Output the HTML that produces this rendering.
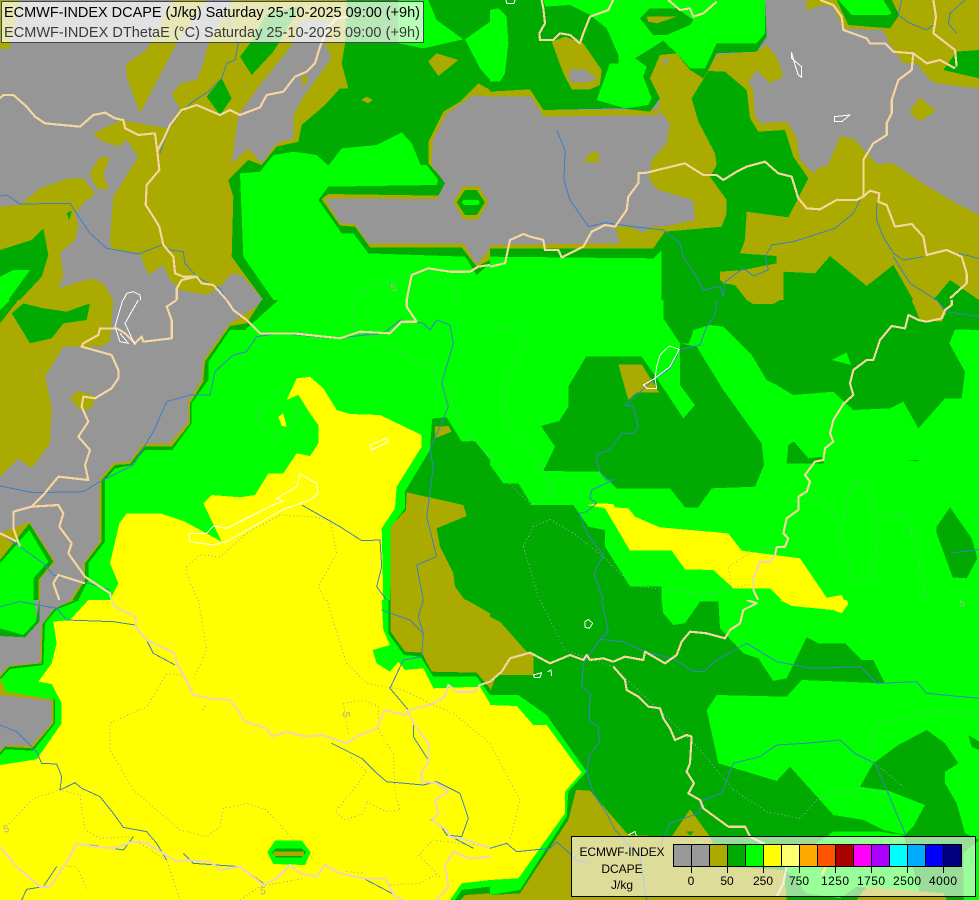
<!DOCTYPE html>
<html><head><meta charset="utf-8"><title>ECMWF-INDEX DCAPE</title>
<style>
html,body{margin:0;padding:0;background:#969696;overflow:hidden}
svg{display:block}
#m{shape-rendering:crispEdges;font-family:"Liberation Sans",sans-serif}
.g{fill:#969696}.o{fill:#aaaa00}.d{fill:#00aa00}.b{fill:#00ff00}.y{fill:#ffff00}
.c,.r,.w,.p{fill:none;stroke-linejoin:round}
.c{stroke:#f5d5a0;stroke-width:6.5}
.r{stroke:#3f7fc4;stroke-width:3}
.w{stroke:#fff;stroke-width:3}
.p{stroke:#a0a0c8;stroke-width:3;stroke-dasharray:3 8}
.n{fill:#b0b090;font-size:32px}
</style></head><body>
<svg id="m" xmlns="http://www.w3.org/2000/svg" width="979" height="900" viewBox="0 0 979 900">
<!-- Q1 -->
<svg x="0" y="0" width="490" height="300" viewBox="0 0 1470 900">
<rect class="g" width="1470" height="900"/>
<polygon class="o" points="0,130 35,130 25,148 0,145"/>
<polygon class="o" points="0,0 60,0 30,130 0,130"/>
<polygon class="o" points="380,190 440,150 520,0 620,0 530,130 420,340 380,230"/>
<polygon class="o" points="0,620 60,615 120,565 205,535 250,535 285,580 245,615 225,640 235,680 225,720 180,760 190,825 175,865 275,835 310,850 340,900 0,900"/>
<polygon class="d" points="0,750 95,720 130,685 145,765 125,830 60,900 0,900"/>
<polygon class="b" points="0,830 40,810 90,810 25,900 0,900"/>
<polygon class="d" points="200,640 215,632 208,660"/>
<polygon class="o" points="300,470 330,475 310,520 325,570 290,565 268,520"/>
<polygon class="o" points="280,400 365,360 500,385 510,370 540,325 515,285 540,250 590,240 610,190 625,130 700,0 1040,0 1035,130 1025,190 1045,265 1020,265 975,315 905,375 895,428 830,440 785,495 745,480 685,540 700,590 695,770 790,900 725,825 695,820 660,860 620,885 540,870 510,840 490,795 445,825 420,760 335,750 330,720 340,590 415,470 380,420 355,440 300,420"/>
<polygon class="g" points="695,490 715,345 780,255 880,130 900,60 990,60 975,130 995,175 910,290 880,345 880,415 830,430 785,490 745,445"/>
<polygon class="o" points="905,225 928,235 910,262"/>
<polygon class="d" points="720,170 750,130 800,40 900,20 835,130 820,155 755,225"/>
<polygon class="d" points="620,290 665,235 695,295 660,345"/>
<polygon class="d" points="1035,130 1040,0 1470,0 1470,900 790,900 695,770 700,590 685,540 745,480 785,495 830,440 895,425 905,375 975,315 1020,265 1045,265 1025,190"/>
<polygon class="o" points="1285,425 1330,335 1380,305 1435,250 1470,270 1470,780 1430,800 1385,742 1110,742 1065,680 1020,677 965,597 985,582 1315,587 1337,548 1285,490"/>
<polygon class="g" points="975,595 1310,597 1335,550 1295,495 1298,420 1340,340 1420,285 1470,290 1470,745 1430,795 1390,730 1105,730 1065,672 1020,670"/>
<polygon class="b" points="720,520 780,515 820,465 880,455 950,465 985,497 1025,445 1130,435 1205,397 1235,430 1262,495 1280,495 1315,540 1310,555 985,560 955,600 1025,700 1060,700 1105,760 1395,770 1430,825 1470,790 1470,900 820,900 730,770"/>
<polygon class="o" points="1360,605 1390,558 1435,558 1465,605 1435,658 1390,658"/>
<polygon class="d" points="1370,607 1395,570 1430,570 1455,607 1430,645 1395,645"/>
<polygon class="b" points="1385,607 1392,600 1435,600 1440,607 1435,615 1392,615"/>
<polygon class="b" points="1270,0 1285,0 1310,60 1390,118 1270,145 1195,130 1195,0"/>
<polygon class="b" points="1395,118 1470,65 1470,240 1440,205"/>
<polygon class="o" points="1285,185 1310,160 1375,180 1315,228"/>
<polygon class="o" points="1083,300 1100,290 1118,300 1105,310"/>
<polyline class="p" points="1060,885 1180,840 1240,820 1340,840 1370,880 1375,900"/>
<text class="n" x="1172" y="872" transform="rotate(-15 1185 860)">5</text>
<polyline class="r" points="640,0 680,50 715,130 705,180 680,190 665,235 625,275 585,300 545,335 510,380 490,430 480,460"/>
<polyline class="r" points="0,588 20,585 60,612 210,610 230,640 270,700 320,745 415,762 485,735 510,750 550,755 555,790 590,830 625,850 660,865 680,900"/>
<polyline class="c" points="0,295 10,285 40,285 80,320 105,350 135,370 240,380 280,345 315,338 345,355 370,360 375,385 415,405 465,400 472,455 478,510 440,555 437,615 460,650 478,680 490,735 520,770 525,820 550,830 590,830 605,850 640,855 680,900"/>
<polyline class="c" points="590,830 545,840 530,865 530,900"/>
<polyline class="c" points="470,455 490,420 510,375 545,330 590,315 625,330 660,345 690,330 720,345 780,322 800,285 850,275 885,230 920,215 945,190 960,140 985,80 1010,55 1045,50"/>
<polyline class="c" points="1220,900 1235,825 1285,805 1350,815 1410,815 1435,800 1470,795"/>
<polyline class="w" points="370,900 380,880 400,875 420,885 422,900"/>
</svg>
<!-- Q2 -->
<svg x="490" y="0" width="489" height="300" viewBox="0 0 1467 900">
<rect class="g" width="1467" height="900"/>
<polygon class="o" points="950,0 950,30 1000,15 1030,20 1060,85 1180,90 1195,125 1240,190 1280,190 1320,240 1340,250 1467,265 1467,0"/>
<polygon class="d" points="1040,0 1075,75 1200,85 1228,45 1205,0"/>
<polygon class="b" points="1045,0 1085,45 1195,45 1205,40 1180,0"/>
<polygon class="d" points="1400,155 1467,150 1467,235 1360,210"/>
<polygon class="o" points="1290,293 1338,332 1290,365 1258,335"/>
<polygon class="o" points="1467,645 1380,600 1290,545 1210,490 1160,492 1090,415 1050,410 1012,500 990,500 970,520 930,480 920,410 890,365 810,370 795,345 790,270 775,245 800,210 840,250 880,230 860,170 830,135 800,155 680,165 655,210 640,235 600,210 560,160 510,165 480,235 510,295 505,330 540,370 530,430 485,480 478,540 505,570 610,600 615,660 520,680 490,680 455,698 420,680 375,678 390,730 0,735 0,900 1467,900"/>
<polygon class="g" points="520,175 538,175 523,200"/>
<polygon class="o" points="280,485 305,455 325,458 328,488"/>
<polygon class="o" points="0,275 120,268 160,330 505,330 505,345 160,350 125,290 0,290"/>
<polygon class="d" points="0,0 825,0 830,110 800,155 680,160 655,210 640,235 600,210 560,160 510,165 480,235 510,295 480,335 395,325 160,330 120,268 0,275"/>
<polygon class="o" points="185,125 225,110 280,130 335,210 330,255 300,268 245,268 220,220"/>
<polygon class="g" points="235,215 250,207 290,210 322,240 280,248 240,245"/>
<polygon class="b" points="160,0 165,20 240,15 300,45 350,85 385,165 385,190 360,190 320,300 405,325 475,315 485,295 460,230 470,200 435,175 520,122 570,170 600,205 645,205 680,130 800,130 825,100 825,0"/>
<polygon class="d" points="450,55 480,25 560,25 610,60 600,75 530,105 490,105"/>
<polygon class="o" points="470,50 560,50 500,70 475,65"/>
<polygon class="b" points="0,30 25,25 50,50 55,130 45,220 30,245 0,245"/>
<polygon class="d" points="655,213 705,215 770,270 780,355 805,395 885,390 910,470 955,535 895,652 770,635 765,720 750,760 860,768 860,790 760,810 690,815 690,840 700,850 735,855 770,900 515,900 515,750 490,775 0,770 0,745 490,745 525,695 695,680 710,640 710,600 660,530 680,495 675,460 625,365 605,295"/>
<polygon class="b" points="0,770 490,775 515,750 515,900 0,900"/>
<polygon class="d" points="880,900 880,815 975,820 1020,768 1130,858 1210,795 1270,900"/>
<polygon class="d" points="1330,900 1380,840 1467,900"/>
<polyline class="r" points="200,390 225,450 222,540 240,600 285,665 295,680 345,668 430,680 520,690 570,730 580,770 625,840 640,870 690,860 700,890 705,845 760,805 790,828 835,810 825,770 845,735 910,725 1035,685 1090,640 1110,600"/>
<polyline class="r" points="1160,610 1160,660 1180,710 1210,760 1240,780 1300,770"/>
<polyline class="r" points="1210,770 1260,850 1340,900"/>
<polyline class="r" points="1235,0 1225,45 1260,70 1310,90 1330,75"/>
<polyline class="r" points="1425,0 1380,40 1375,70 1400,100"/>
<polyline class="r" points="1405,760 1467,775"/>
<polyline class="c" points="155,0 160,25 165,70 148,100 150,120 190,120 210,100 240,105 270,130 280,100 300,50 355,30 370,0"/>
<polyline class="c" points="535,0 570,30 600,25 610,50 640,40 680,5"/>
<polyline class="c" points="990,0 1030,15 1055,50 1060,90 1130,115 1140,130 1185,130 1210,155 1270,160 1310,190 1350,180 1395,205"/>
<polyline class="c" points="1270,160 1265,210 1225,240 1205,300 1205,340 1190,370 1190,405 1150,430 1120,480 1120,590 1140,572 1168,580 1165,605 1190,615 1215,680 1265,672 1300,710 1310,765 1370,750 1415,770 1430,820 1430,850 1380,895"/>
<polyline class="c" points="1120,590 1100,600 1040,600 990,628 950,625 925,595 905,530 865,520 825,485 770,500 740,515 700,540 680,525 640,525 600,500 585,490 470,518 445,520 445,550 415,590 410,630 375,680 345,675 305,695 280,740 215,772 205,750 165,750 160,720 120,710 100,702 60,720 45,790 0,800"/>
<polyline class="c" points="1330,0 1338,50 1330,100 1395,150 1400,200"/>
<polygon class="w" points="905,158 905,175 935,200 935,232 925,225 915,195"/>
<polygon class="w" points="1033,350 1080,345 1055,365 1033,365"/>
<polyline class="w" points="48,0 50,10 72,10 75,0"/>
</svg>
<!-- Q3 -->
<svg x="0" y="300" width="490" height="300" viewBox="0 0 1470 900">
<rect class="g" width="1470" height="900"/>
<polygon class="o" points="0,70 50,0 340,0 330,125 300,140 190,140 135,230 155,320 150,430 95,505 55,475 0,530"/>
<polygon class="d" points="35,40 70,10 130,25 200,35 270,10 260,60 190,70 155,115 90,130 60,80"/>
<polygon class="d" points="0,0 55,0 0,70"/>
<polygon class="b" points="0,0 30,0 0,30"/>
<polygon class="o" points="210,295 235,272 290,290 270,328 240,330"/>
<polygon class="o" points="770,0 800,0 690,70 610,180 605,240 565,305 565,365 510,430 430,430 390,485 340,490 298,540 298,725 250,790 250,840 210,900 300,900 1000,900 1000,0"/>
<polygon class="d" points="785,0 1000,0 1000,900 218,900 255,840 255,790 305,725 305,540 345,495 390,492 430,440 515,440 570,370 570,310 610,245 615,185 690,78 740,70"/>
<polygon class="b" points="835,0 1470,0 1470,900 235,900 265,840 265,790 315,725 315,540 345,505 395,495 435,450 517,450 575,370 575,310 625,240 625,185 690,90 735,90"/>
<polygon class="o" points="0,700 88,665 165,785 120,840 120,900 0,900"/>
<polygon class="d" points="0,780 88,670 160,785 115,840 115,900 0,900"/>
<polygon class="b" points="0,790 88,690 145,785 100,835 100,900 0,900"/>
<polygon class="d" points="1296,360 1300,355 1340,352 1385,425 1425,423 1470,480 1470,900 1170,900 1175,680 1215,625 1215,575 1290,450"/>
<polygon class="o" points="1305,380 1345,378 1355,395 1305,415"/>
<polygon class="o" points="1172,680 1218,630 1220,577 1390,615 1400,648 1310,685 1320,740 1360,820 1365,860 1395,900 1172,900"/>
<polygon class="y" points="860,300 890,235 930,230 970,265 1010,330 1050,342 1140,345 1265,405 1265,440 1190,560 1185,625 1145,685 1150,900 330,900 355,850 330,790 358,670 380,640 480,640 555,665 610,695 665,725 610,610 635,585 720,592 765,585 805,520 850,520 890,460 930,468 955,430 955,375 930,340 895,285"/>
<polygon class="y" points="835,350 850,340 860,380 845,378"/>
<polyline class="p" points="560,800 600,765 660,770 740,700 840,645 930,650 990,660 1010,760 955,860 975,900"/>
<polyline class="p" points="590,895 560,820 560,800"/>
<polyline class="p" points="860,260 780,320 770,370 820,410 880,380 895,310"/>
<polyline class="p" points="1060,0 1060,80 1090,105 1300,210 1345,270 1380,380 1470,470"/>
<polyline class="r" points="0,558 100,578 250,575 300,545 400,495 460,395 500,305 570,285 630,285 645,215 700,165 740,155 770,110 840,100 1000,115 1150,100 1200,60 1270,70 1290,90 1310,60 1350,75 1360,130 1325,250 1345,320 1290,450 1300,500 1280,650 1310,770 1250,795 1270,900"/>
<polyline class="r" points="905,615 1020,680 1085,722 1140,720 1145,800 1130,860 1160,900"/>
<polyline class="r" points="0,700 60,740 130,790 160,825 250,845 330,870"/>
<polyline class="r" points="680,0 720,50"/>
<polyline class="c" points="680,0 700,30 740,60 780,100 880,100 1020,115 1080,95 1170,100 1205,65 1250,65 1220,20 1220,0"/>
<polyline class="c" points="530,0 500,20 515,60 515,115 430,125 425,110 405,130 375,100 350,85 300,85 295,105 250,130 245,140 335,165 355,210 355,235 335,265 285,295 250,290 245,320 265,365 235,410 270,450 255,495 265,540 175,530 130,585 95,620 40,635 40,685 60,740"/>
<polyline class="c" points="95,620 175,615 190,640 178,680 215,730 205,760 255,830 330,880 335,900"/>
<polyline class="c" points="0,700 50,725"/>
<polyline class="c" points="255,850 175,825 160,850 178,900"/>
<polyline class="w" points="368,0 345,80 360,125 385,130 360,100"/>
<polyline class="w" points="415,0 375,70 405,135"/>
<polygon class="w" points="1110,435 1160,415 1165,425 1115,450"/>
<polygon class="w" points="565,700 620,700 640,678 680,685 740,655 830,610 850,605 830,595 890,560 900,522 950,550 955,580 930,600 850,628 680,725 640,735 570,725"/>
</svg>
<!-- Q4 -->
<svg x="490" y="300" width="489" height="300" viewBox="0 0 1467 900">
<rect class="b" width="1467" height="900"/>
<polygon class="d" points="520,0 1467,0 1467,90 1395,88 1378,130 1425,215 1415,295 1365,295 1285,385 1240,305 1200,325 1090,330 1030,275 910,285 860,255 830,240 785,165 700,80 660,75 610,90 597,130 570,130 520,55"/>
<polygon class="o" points="770,0 870,0 850,12 790,12"/>
<polygon class="o" points="1265,0 1340,0 1368,40 1355,65 1290,60"/>
<polygon class="b" points="1025,180 1070,157 1083,195"/>
<polygon class="b" points="1467,150 1440,170 1467,185"/>
<polygon class="d" points="288,170 455,170 500,235 580,355 615,315 570,255 570,130 620,140 700,270 815,430 822,495 795,560 665,565 625,622 585,622 540,565 380,565 330,515 160,513 195,440 153,378 208,363 235,320 235,260"/>
<polygon class="o" points="385,193 455,193 508,278 440,278 415,300"/>
<polygon class="d" points="890,490 895,435 912,425 955,475 1000,470 1000,490"/>
<polygon class="d" points="1250,480 1290,480 1280,484"/>
<polygon class="d" points="1340,680 1380,622 1445,715 1462,775 1430,835 1388,832 1340,700"/>
<polygon class="d" points="0,495 40,550 85,550 125,615 250,615 295,680 345,690 345,740 420,860 515,860 515,900 0,900"/>
<polygon class="y" points="290,615 330,610 370,612 375,622 415,625 435,650 510,682 715,700 755,752 930,775 1010,893 1055,885 1062,900 875,900 840,865 730,865 670,810 585,808 545,752 420,752 345,625"/>
<polyline class="p" points="0,80 60,80 110,130 35,270 60,380 135,460 190,570 125,615 65,560 0,460"/>
<polyline class="p" points="100,740 130,680 180,658 250,700 340,770 400,830 450,860 650,885 790,850"/>
<polyline class="p" points="100,740 145,890"/>
<polyline class="p" points="725,860 715,800 780,760 860,740"/>
<polyline class="p" points="900,605 1000,600 1050,680 1060,730 1090,850 1150,830 1160,720 1150,650 1250,640 1290,800 1310,900"/>
<polyline class="p" points="1060,650 1090,540 1130,560 1150,650"/>
<polyline class="r" points="680,0 675,45 650,80 630,135 570,148 540,205 490,240 440,285 405,315 430,320 445,380 430,400 395,400 360,450 325,460 320,485 330,515 350,540 370,540 305,570 300,595 320,610 290,635 268,640 290,700 340,765 312,820 340,900"/>
<polyline class="r" points="1340,0 1370,35 1467,50"/>
<polyline class="r" points="1385,760 1467,748"/>
<polyline class="c" points="1385,0 1385,15 1365,30 1355,55 1310,65 1285,60 1255,45 1245,85 1205,78 1170,120 1150,180 1130,180 1090,210 1080,250 1090,285 1060,312 1030,360 1020,400 1030,425 1005,445 1000,480 975,485 945,525 960,545 950,575 925,590 925,630 890,655 880,700 895,715 885,740 860,742 855,765 840,785 810,785 790,835 790,870 805,900"/>
<polyline class="w" points="510,165 538,138 568,148 540,200 495,235 500,265 470,265 460,255 495,235 500,200 510,165"/>
</svg>
<!-- Q5 -->
<svg x="0" y="600" width="490" height="300" viewBox="0 0 1470 900">
<rect class="y" width="1470" height="900"/>
<polygon class="b" points="0,0 265,0 210,60 160,65 170,130 155,190 115,245 155,252 185,310 185,370 110,478 0,495"/>
<polygon class="d" points="0,0 240,0 170,28 135,70 130,195 30,207 0,240 25,285 165,298 165,370 100,452 15,448 0,468"/>
<polygon class="o" points="0,0 225,0 165,25 128,72 125,190 28,200 0,232 18,275 160,298 160,370 97,445 15,440 0,458"/>
<polygon class="g" points="0,0 215,0 158,30 124,75 120,188 25,197 0,225 0,285 155,302 155,370 95,437 15,437 0,452"/>
<polygon class="d" points="0,85 70,105 108,65 118,0 118,65 75,112 0,108"/>
<polygon class="b" points="0,0 105,0 108,65 70,105 0,85"/>
<polygon class="b" points="1145,0 1150,90 1170,135 1118,150 1130,190 1170,215 1195,185 1215,210 1270,205 1300,265 1440,260 1470,310 1470,0"/>
<polygon class="d" points="1165,0 1165,100 1212,165 1262,170 1300,230 1430,230 1470,285 1470,0"/>
<polygon class="o" points="1172,0 1172,95 1215,155 1265,158 1295,215 1430,218 1470,265 1470,40 1400,0"/>
<polygon class="d" points="1400,0 1470,40 1470,0"/>
<polygon class="b" points="802,757 825,722 905,722 932,757 915,795 820,792"/>
<polygon class="d" points="815,757 828,745 905,745 918,757 905,772 828,772"/>
<polygon class="o" points="820,755 912,755 912,768 820,768"/>
<polygon class="b" points="1350,900 1385,850 1470,840 1470,900"/>
<polygon class="d" points="1365,900 1385,870 1470,860 1470,900"/>
<polygon class="o" points="1380,900 1395,885 1470,880 1470,900"/>
<polyline class="p" points="595,0 620,150 580,240"/>
<polyline class="p" points="980,0 1040,190 1100,250 1210,270 1290,310 1360,340 1470,430"/>
<polyline class="p" points="555,225 500,222 440,320 330,370 330,450 400,570 540,690 620,710 660,680 670,625 740,610 800,630 880,720"/>
<polyline class="p" points="610,330 620,310"/>
<polyline class="p" points="20,680 100,595 180,570 240,585 255,690 300,715 400,710"/>
<polyline class="p" points="420,730 500,780 540,900"/>
<polyline class="p" points="190,800 230,800 260,865"/>
<polyline class="p" points="1030,310 1090,300 1135,320 1135,390 1180,460 1185,580 1200,630 1160,635 1100,605 1090,640 1035,660 1005,635 1060,570 1100,515 1050,470"/>
<polyline class="p" points="1030,310 1045,400"/>
<polyline class="p" points="920,790 945,760"/>
<polyline class="p" points="1320,830 1255,765 1300,720 1470,740"/>
<polyline class="p" points="1170,855 1260,850 1315,820"/>
<polyline class="p" points="1040,815 1090,820"/>
<polyline class="p" points="720,900 780,860 910,835"/>
<text class="n" x="1025" y="357" transform="rotate(90 1037 347)">5</text>
<text class="n" x="9" y="696" transform="rotate(-15 20 685)">5</text>
<text class="n" x="780" y="884">5</text>
<polyline class="r" points="0,20 60,5 170,25 200,60 340,65 405,75"/>
<polyline class="r" points="440,120 460,160 525,195"/>
<polyline class="r" points="0,375 50,395 110,455 125,490 170,492 185,530 180,570 225,548 245,565 300,590 340,640 370,682 440,695 470,730 500,780"/>
<polyline class="r" points="995,430 1085,475 1125,515 1160,545 1270,555 1310,545 1380,580 1405,655 1385,710 1340,705 1320,675 1290,660"/>
<polyline class="r" points="1240,370 1240,410 1285,480"/>
<polyline class="r" points="65,900 80,868 130,860 170,800"/>
<polyline class="r" points="400,710 370,750 270,735"/>
<polyline class="r" points="1145,30 1230,60 1270,100 1265,170 1210,180 1170,265 1225,330"/>
<polyline class="r" points="1270,0 1255,50 1270,100"/>
<polyline class="r" points="1345,705 1420,745"/>
<polyline class="r" points="550,760 580,790 720,800 790,850"/>
<polyline class="r" points="870,795 910,825"/>
<polyline class="r" points="1090,835 1185,885"/>
<polyline class="c" style="stroke:#f0d8a8" points="335,0 345,20 405,50 410,85 440,120 525,160 530,190 560,240 580,285 625,295 690,300 720,340 735,365 800,385 815,410 860,395 915,410 965,405 1040,430 1080,405 1130,385 1155,330 1215,345 1225,330 1290,315 1335,290 1345,255 1370,275 1425,275 1440,255 1470,245"/>
<polyline class="c" style="stroke:#f0d8a8" points="1225,335 1240,370 1285,430 1285,490 1265,515 1265,545 1310,550 1345,575 1305,600 1315,640 1295,660 1340,690 1350,710 1400,720 1470,745"/>
<polyline class="c" style="stroke:#f0d8a8" points="0,740 50,800 120,860 150,860 210,770 230,730 280,740 340,745 400,725 440,730 530,785 550,780 630,785 660,810 720,800 790,855 830,835 870,795 900,820 950,830 975,795 1020,820 1090,835 1155,835 1185,890 1210,900"/>
<polyline class="c" style="stroke:#f0d8a8" points="1335,800 1360,755 1410,775 1470,770"/>
<polyline class="c" style="stroke:#f0d8a8" points="1335,800 1345,860 1310,900"/>
</svg>
<!-- Q6 -->
<svg x="490" y="600" width="489" height="300" viewBox="0 0 1467 900">
<rect class="d" width="1467" height="900"/>
<polygon class="b" points="515,0 520,40 550,75 585,70 630,5 685,5 690,85 760,160 805,175 850,243 890,235 950,112 985,130 1065,130 1115,180 1150,180 1185,250 935,240 890,290 680,285 650,330 685,490 860,543 900,500 1030,645 1120,660 1180,690 1245,705 1270,680 1305,615 1195,572 1110,560 1150,490 1225,435 1310,390 1365,430 1405,490 1365,515 1365,550 1400,610 1425,700 1467,720 1467,0"/>
<polygon class="y" points="870,0 1070,0 1075,12 1055,40 1030,30 905,18"/>
<polygon class="d" points="1435,405 1467,425 1467,450 1445,440"/>
<polygon class="b" points="1010,710 1030,695 1170,695 1240,705 1290,880 1360,890 1100,860 1050,895 950,880 880,800 900,780"/>
<polygon class="b" points="1420,760 1467,720 1467,900 1420,900"/>
<polygon class="o" points="0,50 30,65 110,155 130,165 130,225 20,225 0,275"/>
<polygon class="o" points="90,880 235,660 258,570 300,572 415,705 545,710 600,628 660,710 700,800 880,810 890,900 0,900 0,885"/>
<polygon class="o" points="1100,900 1130,860 1360,880 1370,900"/>
<polygon class="d" points="590,695 610,695 600,708"/>
<polygon class="b" points="0,285 85,285 170,345 290,515 235,575 230,650 90,870 0,885"/>
<polygon class="y" points="0,315 80,318 130,375 170,375 275,518 225,575 225,640 85,835 0,840"/>
<polygon class="y" points="990,825 1005,800 1010,805 1000,825"/>
<polyline class="p" points="150,0 225,150 370,200 540,360 630,450 730,570 830,635 930,655 980,600 1110,565 1190,580"/>
<polyline class="p" points="1140,450 1160,370 1360,330 1467,350"/>
<polyline class="p" points="1155,490 1240,560"/>
<polyline class="p" points="0,430 90,600 60,720"/>
<text class="n" x="1408" y="20" style="fill:#a0c080">5</text>
<polyline class="r" points="335,0 355,95 330,118 400,125 465,155 555,178 610,215 640,215 680,180 770,130 860,185 965,205 1110,200 1160,250 1280,245 1310,280 1467,295"/>
<polyline class="r" points="330,118 280,190 275,260 300,280 298,360 325,380 328,430 300,460 290,515 310,580 350,640 375,690 450,770 470,900"/>
<polyline class="r" points="0,745 50,730 80,755 180,745 200,725 260,780 300,790"/>
<polyline class="r" points="1050,420 945,430 860,435 810,470 730,490 695,580 640,600 625,640 540,670 510,740"/>
<polyline class="r" points="1050,420 1095,460 1155,490 1190,570 1245,700 1245,720"/>
<polyline class="c" points="770,0 800,10 760,30 750,70 720,90 705,115 650,100 600,95 575,125 560,165 525,190 465,155 460,180 405,170 370,185 340,175 300,180 290,165 280,180 240,165 180,190 120,158 60,175 35,215 0,245"/>
<polyline class="c" points="370,200 405,240 410,270 445,290 475,320 510,325 520,355 540,385 555,420 590,405 605,410 600,490 590,515 612,550 595,580 630,600 640,625 715,680 765,680 780,710 820,730 890,800 880,850 860,890"/>
<polygon class="w" points="285,65 295,58 308,70 298,85 285,82"/>
<polygon class="w" points="130,225 155,218 150,232 133,232"/>
<polyline class="w" points="173,215 183,210 185,228"/>
<polyline class="w" points="415,705 435,695 440,710"/>
</svg>
<!-- top legend -->
<rect x="1.5" y="1.5" width="422" height="41" fill="#fff" fill-opacity=".72" stroke="#445" stroke-width="1"/>
<text x="4" y="17" font-size="14.5" fill="#000" textLength="416" lengthAdjust="spacing">ECMWF-INDEX DCAPE (J/kg) Saturday 25-10-2025 09:00 (+9h)</text>
<text x="4" y="37" font-size="14.5" fill="#3a3a3a" textLength="416" lengthAdjust="spacing">ECMWF-INDEX DThetaE (°C) Saturday 25-10-2025 09:00 (+9h)</text>
<!-- bottom legend -->
<rect x="571.5" y="836.5" width="404" height="60" fill="#fff" fill-opacity=".6" stroke="#000" stroke-width="1"/>
<text x="622" y="856" font-size="12" text-anchor="middle" textLength="85" lengthAdjust="spacing">ECMWF-INDEX</text>
<text x="622" y="873" font-size="12" text-anchor="middle">DCAPE</text>
<text x="622" y="889" font-size="12" text-anchor="middle">J/kg</text>
<g stroke="#000" stroke-width="1">
<rect x="673.5" y="844.5" width="18" height="22" fill="#999"/>
<rect x="691.5" y="844.5" width="18" height="22" fill="#999"/>
<rect x="709.5" y="844.5" width="18" height="22" fill="#aaaa00"/>
<rect x="727.5" y="844.5" width="18" height="22" fill="#00aa00"/>
<rect x="745.5" y="844.5" width="18" height="22" fill="#00ff00"/>
<rect x="763.5" y="844.5" width="18" height="22" fill="#ffff00"/>
<rect x="781.5" y="844.5" width="18" height="22" fill="#ffff70"/>
<rect x="799.5" y="844.5" width="18" height="22" fill="#ffaa00"/>
<rect x="817.5" y="844.5" width="18" height="22" fill="#ff5500"/>
<rect x="835.5" y="844.5" width="18" height="22" fill="#aa0000"/>
<rect x="853.5" y="844.5" width="18" height="22" fill="#ff00ff"/>
<rect x="871.5" y="844.5" width="18" height="22" fill="#aa00ff"/>
<rect x="889.5" y="844.5" width="18" height="22" fill="#00ffff"/>
<rect x="907.5" y="844.5" width="18" height="22" fill="#00aaff"/>
<rect x="925.5" y="844.5" width="18" height="22" fill="#0000ff"/>
<rect x="943.5" y="844.5" width="18" height="22" fill="#000080"/>
<path d="M691.5 866v7M727.5 866v7M763.5 866v7M799.5 866v7M835.5 866v7M871.5 866v7M907.5 866v7M943.5 866v7" fill="none"/>
</g>
<g font-size="12" text-anchor="middle" fill="#000">
<text x="691" y="885">0</text>
<text x="727" y="885">50</text>
<text x="763" y="885">250</text>
<text x="799" y="885">750</text>
<text x="835" y="885" textLength="28" lengthAdjust="spacing">1250</text>
<text x="871" y="885" textLength="28" lengthAdjust="spacing">1750</text>
<text x="907" y="885" textLength="28" lengthAdjust="spacing">2500</text>
<text x="943" y="885" textLength="28" lengthAdjust="spacing">4000</text>
</g>
</svg>
</body></html>
